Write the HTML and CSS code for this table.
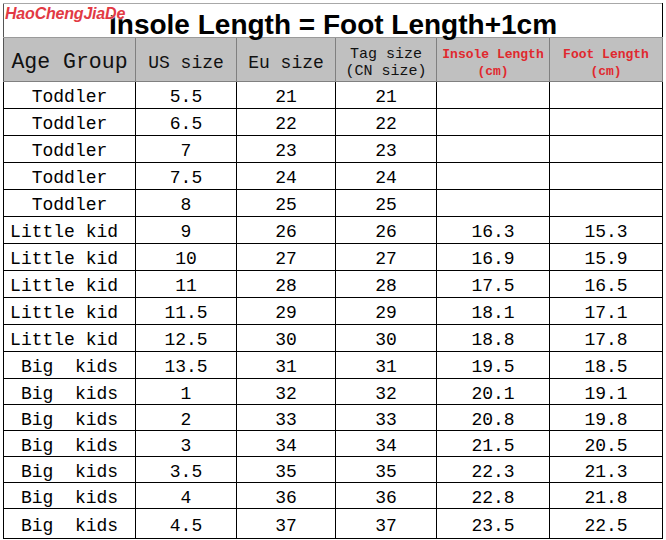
FILE: index.html
```html
<!DOCTYPE html>
<html>
<head>
<meta charset="utf-8">
<link rel="stylesheet" href="styles.css">
</head>
<body>
<div class="page">
<table class="sheet">
<colgroup>
<col class="c1"><col class="c2"><col class="c3"><col class="c4"><col class="c5"><col class="c6">
</colgroup>
<tr class="r-title">
<td class="title" colspan="6"><span class="logo">HaoChengJiaDe</span>Insole Length = Foot Length+1cm</td>
</tr>
<tr class="r-head">
<td class="hd age-hd">Age Group</td>
<td class="hd">US size</td>
<td class="hd">Eu size</td>
<td class="hd tag">Tag size<br>(CN size)</td>
<td class="hd red">Insole Length<br>(cm)</td>
<td class="hd red">Foot Length<br>(cm)</td>
</tr>
<tr class="r27"><td>Toddler</td><td>5.5</td><td>21</td><td>21</td><td></td><td></td></tr>
<tr class="r27"><td>Toddler</td><td>6.5</td><td>22</td><td>22</td><td></td><td></td></tr>
<tr class="r27"><td>Toddler</td><td>7</td><td>23</td><td>23</td><td></td><td></td></tr>
<tr class="r27"><td>Toddler</td><td>7.5</td><td>24</td><td>24</td><td></td><td></td></tr>
<tr class="r27"><td>Toddler</td><td>8</td><td>25</td><td>25</td><td></td><td></td></tr>
<tr class="r27"><td>Little kid&nbsp;</td><td>9</td><td>26</td><td>26</td><td>16.3</td><td>15.3</td></tr>
<tr class="r27"><td>Little kid&nbsp;</td><td>10</td><td>27</td><td>27</td><td>16.9</td><td>15.9</td></tr>
<tr class="r27"><td>Little kid&nbsp;</td><td>11</td><td>28</td><td>28</td><td>17.5</td><td>16.5</td></tr>
<tr class="r27"><td>Little kid&nbsp;</td><td>11.5</td><td>29</td><td>29</td><td>18.1</td><td>17.1</td></tr>
<tr class="r27"><td>Little kid&nbsp;</td><td>12.5</td><td>30</td><td>30</td><td>18.8</td><td>17.8</td></tr>
<tr class="r27"><td class="pre">Big  kids</td><td>13.5</td><td>31</td><td>31</td><td>19.5</td><td>18.5</td></tr>
<tr class="r26"><td class="pre">Big  kids</td><td>1</td><td>32</td><td>32</td><td>20.1</td><td>19.1</td></tr>
<tr class="r26"><td class="pre">Big  kids</td><td>2</td><td>33</td><td>33</td><td>20.8</td><td>19.8</td></tr>
<tr class="r26"><td class="pre">Big  kids</td><td>3</td><td>34</td><td>34</td><td>21.5</td><td>20.5</td></tr>
<tr class="r26"><td class="pre">Big  kids</td><td>3.5</td><td>35</td><td>35</td><td>22.3</td><td>21.3</td></tr>
<tr class="r26"><td class="pre">Big  kids</td><td>4</td><td>36</td><td>36</td><td>22.8</td><td>21.8</td></tr>
<tr class="r30"><td class="pre">Big  kids</td><td>4.5</td><td>37</td><td>37</td><td>23.5</td><td>22.5</td></tr>
</table>
</div>
</body>
</html>
```
FILE: styles.css
```css
html, body {
  margin: 0;
  padding: 0;
  background: #ffffff;
}
.page {
  padding: 3px 0 0 3px;
}
.sheet {
  border-collapse: collapse;
  table-layout: fixed;
  width: 659px;
  font-family: "Liberation Mono", monospace;
  font-size: 18px;
  color: #000;
}
.c1 { width: 132px; }
.c2 { width: 101px; }
.c3 { width: 99px; }
.c4 { width: 101px; }
.c5 { width: 113px; }
.c6 { width: 113px; }
.sheet td {
  border: 1px solid #000;
  padding: 4px 0 0 0;
  text-align: center;
  vertical-align: middle;
  line-height: 1;
  overflow: hidden;
  white-space: nowrap;
}
.r-title { height: 34px; }
.r-head { height: 44px; }
.r27 { height: 27px; }
.r26 { height: 26px; }
.r30 { height: 30px; }
.sheet td.title {
  position: relative;
  overflow: visible;
  border-top: 1px solid #a8a8a8;
  border-left: 1px solid #555;
  border-right: 1px solid #000;
  border-bottom: 1px solid #9a9a9a;
  font-family: "Liberation Sans", Arial, sans-serif;
  font-weight: bold;
  font-size: 28px;
  color: #000;
  vertical-align: bottom;
  line-height: 24px;
  padding: 0;
}
.logo {
  position: absolute;
  left: 1px;
  top: 1px;
  font-family: "Liberation Sans", Arial, sans-serif;
  font-style: italic;
  font-weight: bold;
  font-size: 16px;
  line-height: 18px;
  letter-spacing: -0.2px;
  color: #e23a44;
  text-shadow: 0 0 2px #fff, 0 0 1px #fff;
}
.sheet td.hd {
  background: #c0c0c0;
  border-color: #808080;
  color: #111;
  padding-top: 6px;
}
.sheet td.age-hd {
  font-size: 21.5px;
  border-left-color: #555;
}
.sheet td.tag {
  font-size: 15px;
  line-height: 17px;
}
.sheet td.red {
  color: #e0282e;
  font-weight: bold;
  font-size: 13px;
  line-height: 17px;
}
.sheet td.pre {
  white-space: pre;
}
```
